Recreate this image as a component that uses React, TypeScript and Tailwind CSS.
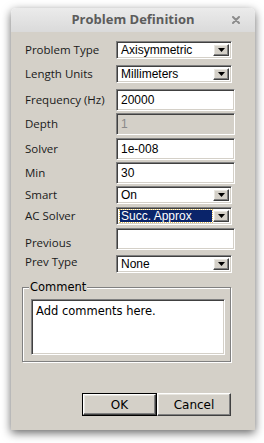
import React from 'react';

const sunken =
  'border border-t-[#808080] border-l-[#808080] border-r-white border-b-white shadow-[inset_1px_1px_0_#404040,inset_-1px_-1px_0_#d4d0c8]';
const raised =
  'border border-t-white border-l-white border-r-[#404040] border-b-[#404040] shadow-[inset_-1px_-1px_0_#808080,inset_1px_1px_0_#e8e6e0]';

const Arrow = () => (
  <div className={`w-[16px] h-full bg-[#d4d0c8] flex items-center justify-center ${raised}`}>
    <svg width="7" height="4" viewBox="0 0 7 4">
      <path d="M0 0h7L3.5 4z" fill="#000" />
    </svg>
  </div>
);

const Select = ({ value, active }: { value: string; active?: boolean }) => (
  <div className={`w-[116px] h-[18px] bg-white flex p-[2px] ${sunken}`}>
    <div className="flex-1 pl-[1px] pr-[1px] flex items-center">
      <div
        className={
          active
            ? 'flex-1 h-full bg-[#0a246a] text-white outline outline-1 outline-dotted outline-[#e0c060] pl-[1px] flex items-center'
            : 'flex-1 h-full pl-[1px] flex items-center'
        }
      >
        {value}
      </div>
    </div>
    <Arrow />
  </div>
);

const Input = ({ value, disabled }: { value: string; disabled?: boolean }) => (
  <div
    className={`w-[119px] h-[22px] flex items-center pl-[4px] ${sunken} ${
      disabled ? 'bg-[#d4d0c8] text-[#8a8a8a]' : 'bg-white'
    }`}
  >
    {value}
  </div>
);

const rows: { label: string; mt: string; lb?: string; field: React.ReactNode }[] = [
  { label: 'Problem Type', mt: 'mt-0', field: <Select value="Axisymmetric" /> },
  { label: 'Length Units', mt: 'mt-[6px]', field: <Select value="Millimeters" /> },
  { label: 'Frequency (Hz)', mt: 'mt-[6px]', field: <Input value="20000" /> },
  { label: 'Depth', mt: 'mt-[2px]', field: <Input value="1" disabled /> },
  { label: 'Solver', mt: 'mt-[3px]', field: <Input value="1e-008" /> },
  { label: 'Min', mt: 'mt-[2px]', field: <Input value="30" /> },
  { label: 'Smart', mt: 'mt-[2px]', field: <Select value="On" /> },
  { label: 'AC Solver', mt: 'mt-[3px]', field: <Select value="Succ. Approx" active /> },
  { label: 'Previous', mt: 'mt-[3px]', lb: 'translate-y-[4px]', field: <Input value="" /> },
  { label: 'Prev Type', mt: 'mt-[5px]', lb: '-translate-y-[2px]', field: <Select value="None" /> },
];

export default function App() {
  return (
    <div className="w-[264px] h-[443px] bg-white pt-[8px] pl-[11px]">
      <div className="w-[244px] h-[422px] rounded-t-[5px] overflow-hidden flex flex-col shadow-[0_3px_10px_rgba(0,0,0,0.6)]">
        <div
          className="h-[24px] bg-gradient-to-b from-[#ebebeb] to-[#dadada] relative flex items-center justify-center text-[#5c5c5c] font-bold text-[13px]"
          style={{ fontFamily: '"Open Sans", sans-serif' }}
        >
          Problem Definition
          <svg className="absolute right-[15px] top-[8px]" width="8" height="8" viewBox="0 0 8 8">
            <path d="M1 1l6 6M7 1l-6 6" stroke="#8c8c8c" strokeWidth="2" strokeLinecap="round" />
          </svg>
        </div>
        <div className="flex-1 bg-[#d4d0c8] flex flex-col pt-[9px] text-black">
          {rows.map((r) => (
            <div key={r.label} className={`flex items-center ${r.mt}`}>
              <div
                className={`w-[105px] pl-[14px] text-[11.5px] text-[#1a1a1a] ${r.lb ?? ''}`}
                style={{ fontFamily: '"Open Sans", sans-serif' }}
              >
                {r.label}
              </div>
              <div className="text-[12px]" style={{ fontFamily: '"Liberation Sans", sans-serif' }}>
                {r.field}
              </div>
            </div>
          ))}
          <div className="ml-[11px] mt-[14px] w-[209px] h-[75px] border border-[#808080] shadow-[1px_1px_0_#fff,inset_1px_1px_0_#fff] relative">
            <span
              className="absolute left-[6px] top-[-8px] bg-[#d4d0c8] px-[1px] leading-[14px]"
              style={{ fontFamily: '"DejaVu Sans", sans-serif', fontSize: '11.5px' }}
            >
              Comment
            </span>
            <div
              className={`ml-[8px] mt-[11px] w-[194px] h-[56px] bg-white px-[4px] pt-[3px] ${sunken}`}
              style={{ fontFamily: '"DejaVu Sans", sans-serif', fontSize: '11.5px' }}
            >
              Add comments here.
            </div>
          </div>
          <div
            className="flex ml-[71px] mt-[31px] text-[12px]"
            style={{ fontFamily: '"DejaVu Sans", sans-serif' }}
          >
            <div className="w-[75px] h-[23px] border border-black">
              <div className={`w-full h-full bg-[#d4d0c8] flex items-center justify-center ${raised}`}>OK</div>
            </div>
            <div className={`w-[74px] h-[23px] bg-[#d4d0c8] flex items-center justify-center ${raised}`}>
              Cancel
            </div>
          </div>
        </div>
      </div>
    </div>
  );
}
